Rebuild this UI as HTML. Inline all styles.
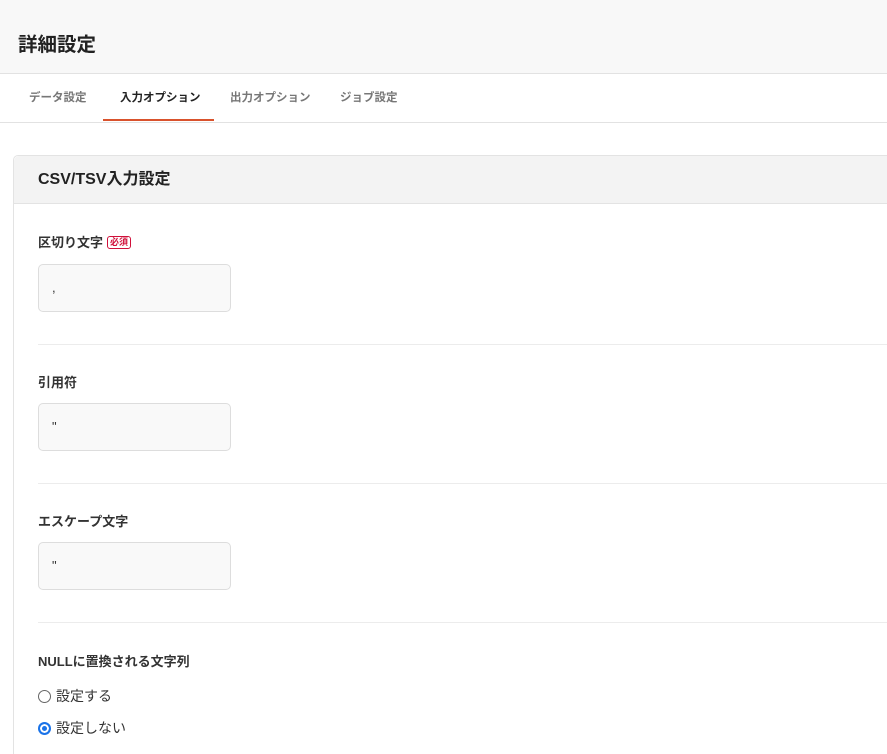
<!DOCTYPE html>
<html style="width:887px;height:754px;overflow:hidden"><head><meta charset="utf-8"><style>
*{box-sizing:border-box;margin:0;padding:0}
body{width:887px;height:754px;overflow:hidden;background:#fff;font-family:"Liberation Sans","Noto Sans CJK JP",sans-serif;color:#333;position:relative}
.hdr{position:absolute;left:0;top:0;width:887px;height:74px;background:#f8f8f8;border-bottom:1px solid #e2e2e2}
.hdr h1{position:absolute;left:18px;top:33px;font-size:19.5px;font-weight:bold;color:#222;line-height:24px}
.tabs{position:absolute;left:0;top:74px;width:887px;height:49px;border-bottom:1px solid #e2e2e2}
.tab{position:absolute;top:16px;font-size:11.5px;font-weight:bold;color:#777;line-height:16px}
.tab.on{color:#222}
.ul{position:absolute;left:103px;top:119px;width:111px;height:2px;background:#d9522c}
.card{position:absolute;left:13px;top:155px;width:890px;height:700px;border:1px solid #e3e3e3;border-radius:5px}
.ch{height:48px;background:#f3f3f3;border-bottom:1px solid #e3e3e3;border-radius:5px 5px 0 0;padding:14px 0 0 24px;font-size:16px;font-weight:bold;color:#222;line-height:20px}
.lbl{position:absolute;left:38px;font-size:13px;font-weight:bold;color:#333;line-height:16px}
.req{display:inline-block;font-size:9px;color:#d0103a;border:1px solid #d0103a;border-radius:3px;padding:0 2px;line-height:11px;vertical-align:2px;margin-left:4px}
.inp{position:absolute;left:38px;width:193px;height:48px;background:#f9f9f9;border:1px solid #ddd;border-radius:5px;font-size:13px;padding:15px 0 0 13px;color:#333}
.sep{position:absolute;left:38px;width:849px;height:1px;background:#ececec}
.rad{position:absolute;left:38px;font-size:14px;color:#333;line-height:18px}
.rad i{display:inline-block;width:13px;height:13px;border:1px solid #666;border-radius:50%;vertical-align:-2px;margin-right:5px}
.rad i.on{border:2px solid #1a73e8;box-shadow:inset 0 0 0 2px #fff;background:#1a73e8}
</style></head><body>
<div class="hdr"><h1>詳細設定</h1></div>
<div class="tabs">
<span class="tab" style="left:29px">データ設定</span>
<span class="tab on" style="left:120px">入力オプション</span>
<span class="tab" style="left:230px">出力オプション</span>
<span class="tab" style="left:340px">ジョブ設定</span>
</div>
<div class="ul"></div>
<div class="card"><div class="ch">CSV/TSV入力設定</div></div>
<div class="lbl" style="top:235px">区切り文字<span class="req">必須</span></div>
<div class="inp" style="top:264px">,</div>
<div class="sep" style="top:344px"></div>
<div class="lbl" style="top:375px">引用符</div>
<div class="inp" style="top:403px">"</div>
<div class="sep" style="top:483px"></div>
<div class="lbl" style="top:514px">エスケープ文字</div>
<div class="inp" style="top:542px">"</div>
<div class="sep" style="top:622px"></div>
<div class="lbl" style="top:654px">NULLに置換される文字列</div>
<div class="rad" style="top:687px"><i></i>設定する</div>
<div class="rad" style="top:719px"><i class="on"></i>設定しない</div>
</body></html>
